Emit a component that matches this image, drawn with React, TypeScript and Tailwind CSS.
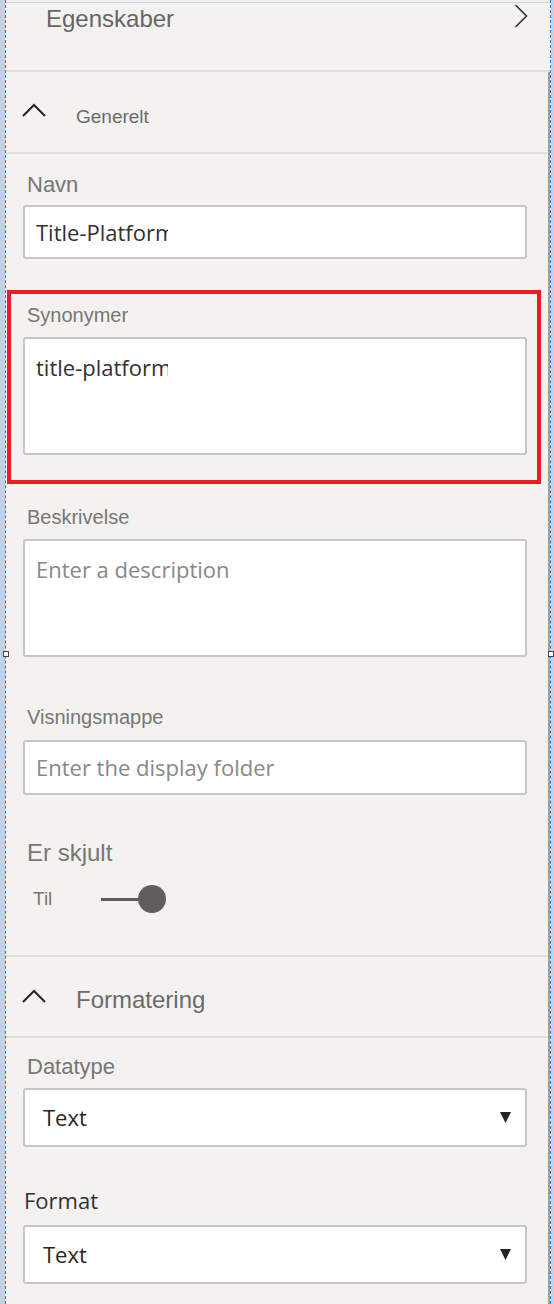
import React from 'react';

const labelFont = { fontFamily: '"Liberation Sans", Arial, sans-serif' };
const fieldFont = { fontFamily: '"Open Sans", "Noto Sans", sans-serif' };

function ChevronUp() {
  return (
    <svg width="24" height="14" viewBox="0 0 24 14" className="shrink-0">
      <path d="M1 13 L12 2 L23 13" fill="none" stroke="#252423" strokeWidth="2" />
    </svg>
  );
}

function Caret() {
  return (
    <svg width="11" height="11" viewBox="0 0 11 11">
      <path d="M0 0 H11 L5.5 11 Z" fill="#252423" />
    </svg>
  );
}

function Label({ children, className = '' }: { children: React.ReactNode; className?: string }) {
  return (
    <div style={labelFont} className={`h-[24px] text-[20px] leading-[24px] text-[#777674] ${className}`}>
      {children}
    </div>
  );
}

function Box({ children, className = '' }: { children?: React.ReactNode; className?: string }) {
  return (
    <div
      style={fieldFont}
      className={`ml-[17px] w-[504px] rounded-[3px] border-2 border-[#c8c6c4] bg-white ${className}`}
    >
      {children}
    </div>
  );
}

function Select({ value, className = '' }: { value: string; className?: string }) {
  return (
    <Box className={`flex h-[59px] items-center justify-between pl-[18px] pr-[14px] ${className}`}>
      <span className="text-[22px] text-[#252423]">{value}</span>
      <Caret />
    </Box>
  );
}

export default function App() {
  return (
    <div className="relative flex h-[1304px] w-[554px] overflow-hidden bg-[#c5d1e3]">
      <div className="w-[5px] shrink-0" />
      <div className="flex w-[546px] flex-col border-x border-dashed border-[#1a7ad6] bg-[#f3f2f1]">
        <div className="h-[2px] bg-[#eceef1]" />
        <div className="h-[1px] bg-[#d4d4d4]" />

        {/* Egenskaber header */}
        <div className="flex h-[67px] items-start justify-between pl-[40px] pr-[22px]">
          <span style={labelFont} className="mt-[1px] text-[24px] leading-[30px] text-[#666564]">
            Egenskaber
          </span>
          <svg width="14" height="24" viewBox="0 0 14 24" className="mt-[1px]">
            <path d="M1.5 1 L12.5 12 L1.5 23" fill="none" stroke="#323130" strokeWidth="1.6" />
          </svg>
        </div>
        <div className="h-[2px] bg-[#e1dfdd]" />

        <div className="flex flex-1">
          <div className="flex-1">
            {/* Generelt */}
            <div className="flex h-[80px] items-center pl-[16px]">
              <div className="-mt-[4px]">
                <ChevronUp />
              </div>
              <span style={labelFont} className="ml-[30px] mt-[10px] text-[19px] text-[#6b6a69]">
                Generelt
              </span>
            </div>
            <div className="h-[2px] bg-[#e1dfdd]" />

            <Label className="mt-[19px] pl-[21px] text-[22px]">Navn</Label>
            <Box className="mt-[8px] flex h-[54px] items-center pl-[11px]">
              <span className="inline-block w-[132px] overflow-hidden whitespace-nowrap text-[22px] text-[#323130]">
                Title-Platform
              </span>
            </Box>

            <div className="ml-[1px] mt-[31px] w-[534px] border-4 border-[#ed1c24] pb-[25px] pt-[9px]">
              <Label className="pl-[16px]">Synonymer</Label>
              <div
                style={fieldFont}
                className="ml-[12px] mt-[10px] h-[118px] w-[504px] rounded-[3px] border-2 border-[#c8c6c4] bg-white pl-[11px] pt-[13px]"
              >
                <span className="inline-block w-[132px] overflow-hidden whitespace-nowrap text-[22px] leading-[30px] text-[#323130]">
                  title-platform
                </span>
              </div>
            </div>

            <Label className="mt-[21px] pl-[21px]">Beskrivelse</Label>
            <Box className="mt-[10px] h-[118px] pl-[11px] pt-[13px]">
              <span className="text-[22px] leading-[30px] text-[#8a8886]">Enter a description</span>
            </Box>

            <Label className="mt-[48px] pl-[21px]">Visningsmappe</Label>
            <Box className="mt-[11px] flex h-[55px] items-center pl-[11px]">
              <span className="text-[22px] text-[#8a8886]">Enter the display folder</span>
            </Box>

            <div style={labelFont} className="mt-[44px] h-[28px] pl-[21px] text-[24px] leading-[28px] text-[#777674]">
              Er skjult
            </div>
            <div className="mt-[17px] flex h-[30px] items-center pl-[27px]">
              <span style={labelFont} className="w-[68px] text-[19px] text-[#777674]">
                Til
              </span>
              <div className="h-[3px] w-[40px] bg-[#605e5c]" />
              <div className="-ml-[3px] h-[28px] w-[28px] rounded-full bg-[#605e5c]" />
            </div>
            <div className="mt-[41px] h-[2px] bg-[#e1dfdd]" />

            {/* Formatering */}
            <div className="flex h-[79px] items-center pl-[16px]">
              <div className="-mt-[2px]">
                <ChevronUp />
              </div>
              <span style={labelFont} className="ml-[30px] mt-[6px] text-[24px] text-[#6b6a69]">
                Formatering
              </span>
            </div>
            <div className="h-[2px] bg-[#e1dfdd]" />

            <Label className="mt-[15px] h-[28px] pl-[21px] text-[22px] leading-[28px]">Datatype</Label>
            <Select value="Text" className="mt-[7px]" />

            <div style={fieldFont} className="mt-[39px] h-[28px] pl-[18px] text-[22px] leading-[28px] text-[#323130]">
              Format
            </div>
            <Select value="Text" className="mt-[11px]" />
          </div>
          <div className="w-[2px] bg-[#a19f9d]" />
        </div>
      </div>

      {/* selection handles */}
      <div className="absolute left-[3px] top-[651px] h-[6px] w-[6px] border border-[#444] bg-white" />
      <div className="absolute left-[548px] top-[651px] h-[6px] w-[6px] border border-[#444] bg-white" />
    </div>
  );
}
